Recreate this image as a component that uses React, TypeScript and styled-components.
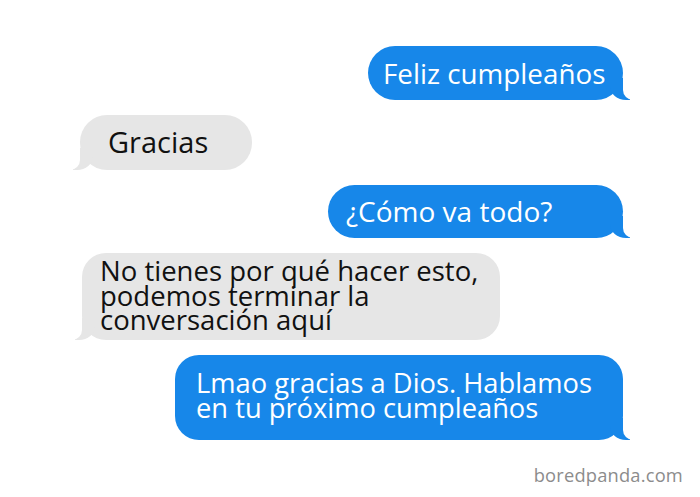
import React from "react";
import styled, { createGlobalStyle, css } from "styled-components";

const Global = createGlobalStyle`
  html, body { margin: 0; padding: 0; background: #ffffff; }
  body { font-family: "Open Sans", "DejaVu Sans", sans-serif; }
`;

const BLUE = "#1787e9";
const GRAY = "#e6e6e6";

const Page = styled.div`
  width: 700px;
  height: 497px;
  box-sizing: border-box;
  padding: 46px 77px 0 0;
  display: flex;
  flex-direction: column;
  gap: 15px;
  background: #fff;
  position: relative;
  overflow: hidden;
`;

const Row = styled.div<{ $me?: boolean; $indent?: number }>`
  display: flex;
  justify-content: ${(p) => (p.$me ? "flex-end" : "flex-start")};
  padding-left: ${(p) => p.$indent ?? 0}px;
`;

const Bubble = styled.div<{
  $me?: boolean;
  $w: number;
  $h: number;
  $pl: number;
  $pt?: number;
  $r?: number;
  $fs?: number;
}>`
  position: relative;
  box-sizing: border-box;
  width: ${(p) => p.$w}px;
  height: ${(p) => p.$h}px;
  padding-left: ${(p) => p.$pl}px;
  padding-top: ${(p) => p.$pt ?? 0}px;
  border-radius: ${(p) => p.$r ?? 27}px;
  display: flex;
  align-items: ${(p) => (p.$pt !== undefined ? "flex-start" : "center")};
  font-size: ${(p) => p.$fs ?? 28}px;
  line-height: 24.5px;
  white-space: pre-line;
  ${(p) =>
    p.$me
      ? css`
          background: ${BLUE};
          color: #ffffff;
          &::before {
            content: "";
            position: absolute;
            right: -7px;
            bottom: 0;
            width: 20px;
            height: 22px;
            background: ${BLUE};
            border-bottom-left-radius: 16px 14px;
          }
          &::after {
            content: "";
            position: absolute;
            right: -26px;
            bottom: 0;
            width: 26px;
            height: 24px;
            background: #ffffff;
            border-bottom-left-radius: 10px;
          }
        `
      : css`
          background: ${GRAY};
          color: #111111;
          &::before {
            content: "";
            position: absolute;
            left: -7px;
            bottom: 0;
            width: 20px;
            height: 22px;
            background: ${GRAY};
            border-bottom-right-radius: 16px 14px;
          }
          &::after {
            content: "";
            position: absolute;
            left: -26px;
            bottom: 0;
            width: 26px;
            height: 24px;
            background: #ffffff;
            border-bottom-right-radius: 10px;
          }
        `}
`;

const Text = styled.span`
  position: relative;
  z-index: 1;
`;

const Watermark = styled.div`
  position: absolute;
  right: 17px;
  bottom: 10px;
  font-family: "Open Sans", sans-serif;
  font-size: 18.3px;
  color: #8c8c8c;
  letter-spacing: 0.2px;
`;

export default function App() {
  return (
    <>
      <Global />
      <Page>
        <Row $me>
          <Bubble $me $w={255} $h={54} $pl={15} $fs={27.8}>
            <Text>Feliz cumpleaños</Text>
          </Bubble>
        </Row>
        <Row $indent={80}>
          <Bubble $w={172} $h={55} $pl={28} $fs={29}>
            <Text>Gracias</Text>
          </Bubble>
        </Row>
        <Row $me>
          <Bubble $me $w={295} $h={53} $pl={18} $fs={28}>
            <Text>¿Cómo va todo?</Text>
          </Bubble>
        </Row>
        <Row $indent={82}>
          <Bubble $w={418} $h={87} $pl={18} $pt={6} $r={24} $fs={27.5}>
            <Text>{"No tienes por qué hacer esto,\npodemos terminar la\nconversación aquí"}</Text>
          </Bubble>
        </Row>
        <Row $me>
          <Bubble $me $w={448} $h={85} $pl={21} $pt={16} $r={24} $fs={27.3}>
            <Text>{"Lmao gracias a Dios. Hablamos\nen tu próximo cumpleaños"}</Text>
          </Bubble>
        </Row>
        <Watermark>boredpanda.com</Watermark>
      </Page>
    </>
  );
}
